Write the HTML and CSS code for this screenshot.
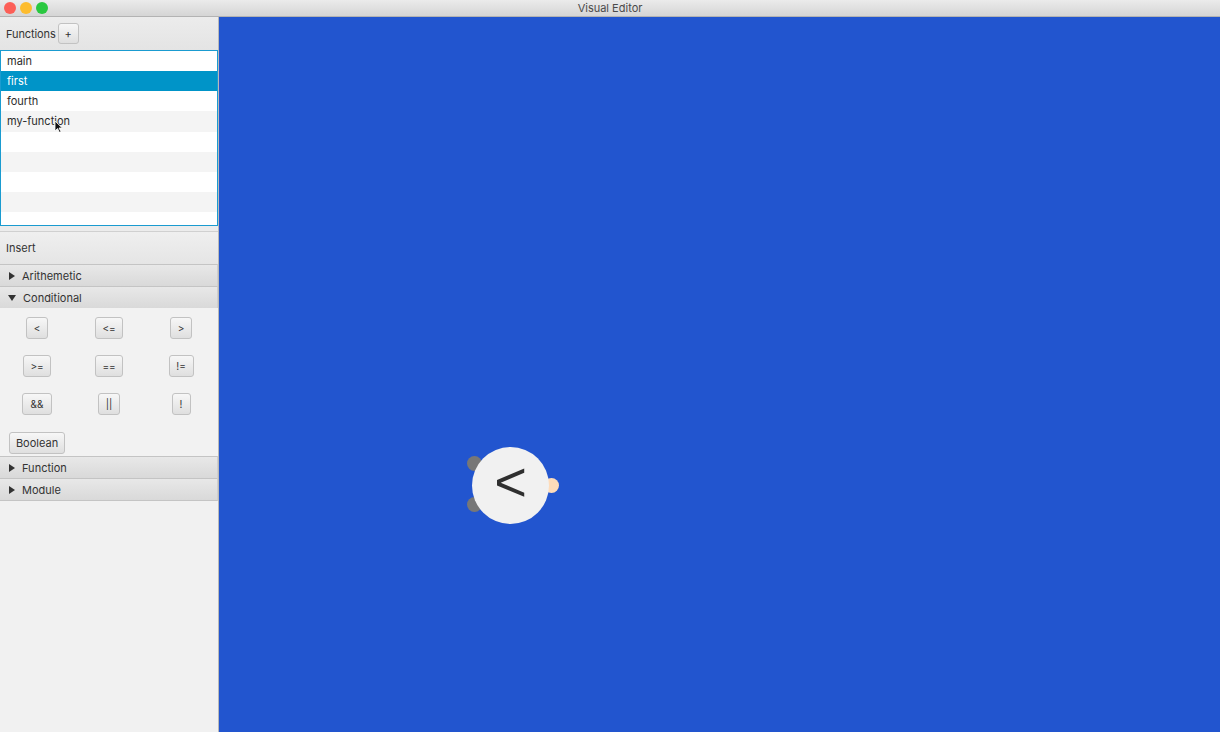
FILE: index.html
```html
<!DOCTYPE html>
<html>
<head>
<meta charset="utf-8">
<title>Visual Editor</title>
<link rel="stylesheet" href="styles.css">
</head>
<body>
<div class="window">
  <div class="titlebar">
    <div class="lights">
      <span class="light red"></span>
      <span class="light yellow"></span>
      <span class="light green"></span>
    </div>
    <div class="title">Visual Editor</div>
  </div>
  <div class="main">
    <aside class="sidebar">
      <div class="fn-header">
        <span class="label">Functions</span>
        <button class="btn plus">+</button>
      </div>
      <div class="list">
        <div class="row">main</div>
        <div class="row odd selected">first</div>
        <div class="row">fourth</div>
        <div class="row odd hover">my-function
          <svg class="cursor" width="9" height="13" viewBox="0 0 9 13"><path d="M1 1 L1 11 L3.5 8.5 L5.5 12.5 L7 11.8 L5 8 L8.3 8 Z" fill="#111" stroke="#fff" stroke-width="0.8"/></svg>
        </div>
        <div class="row"></div>
        <div class="row odd"></div>
        <div class="row"></div>
        <div class="row odd"></div>
        <div class="row"></div>
      </div>
      <div class="sep"></div>
      <div class="insert-header">Insert</div>
      <div class="pane-header"><span class="arrow right"></span>Arithemetic</div>
      <div class="pane-header"><span class="arrow down"></span>Conditional</div>
      <div class="pane-content">
        <div class="op-grid">
          <div class="cell"><button class="btn op w22">&lt;</button></div>
          <div class="cell"><button class="btn op w28">&lt;=</button></div>
          <div class="cell"><button class="btn op w22">&gt;</button></div>
          <div class="cell"><button class="btn op w28">&gt;=</button></div>
          <div class="cell"><button class="btn op w28">==</button></div>
          <div class="cell"><button class="btn op w25">!=</button></div>
          <div class="cell"><button class="btn op w30">&amp;&amp;</button></div>
          <div class="cell"><button class="btn op w22">||</button></div>
          <div class="cell"><button class="btn op w19">!</button></div>
        </div>
        <button class="btn bool">Boolean</button>
      </div>
      <div class="pane-header"><span class="arrow right"></span>Function</div>
      <div class="pane-header last"><span class="arrow right"></span>Module</div>
      <div class="rest"></div>
    </aside>
    <section class="canvas">
      <span class="port in1"></span>
      <span class="port in2"></span>
      <span class="port out"></span>
      <div class="node"><span class="glyph">&lt;</span></div>
    </section>
  </div>
</div>
</body>
</html>
```
FILE: styles.css
```css
* { box-sizing: border-box; }
html, body { margin: 0; padding: 0; }
body {
  width: 1220px;
  height: 732px;
  overflow: hidden;
  font-family: "Inter", "Liberation Sans", sans-serif;
  font-size: 11px;
  color: #333;
}
.window {
  display: flex;
  flex-direction: column;
  width: 1220px;
  height: 732px;
}
.titlebar {
  height: 17px;
  flex: 0 0 17px;
  background: linear-gradient(#ebebeb, #d5d5d5);
  border-bottom: 1px solid #b3b3b3;
  display: flex;
  align-items: center;
  justify-content: center;
  position: relative;
}
.lights {
  position: absolute;
  left: 4px;
  top: 2px;
  display: flex;
  gap: 4px;
}
.light {
  width: 12px;
  height: 12px;
  border-radius: 50%;
  display: block;
}
.red { background: #fc5f57; }
.yellow { background: #fdbc2e; }
.green { background: #2ac840; }
.title {
  font-size: 11px;
  color: #4a4a4a;
  line-height: 16px;
}
.main {
  flex: 1;
  display: flex;
}
.sidebar {
  width: 219px;
  flex: 0 0 219px;
  background: #f1f1f1;
  border-right: 1px solid #b9b9b9;
  display: flex;
  flex-direction: column;
}
.fn-header {
  height: 33px;
  flex: 0 0 33px;
  display: flex;
  align-items: center;
  gap: 2px;
  padding-left: 6px;
  background: linear-gradient(#ececec, #e4e4e4);
}
.label { color: #333; letter-spacing: -0.1px; }
.btn {
  font-family: "Inter", "Liberation Sans", sans-serif;
  font-size: 10px;
  color: #333;
  background: linear-gradient(#f7f7f7, #dfdfdf);
  border: 1px solid #c2c2c2;
  border-radius: 3px;
  padding: 0;
  height: 22px;
}
.plus { width: 21px; height: 21px; font-size: 11px; }
.list {
  height: 176px;
  flex: 0 0 176px;
  border: 1px solid #1a9bd0;
  background: #fff;
  overflow: hidden;
}
.row {
  height: 20px;
  line-height: 20px;
  padding-left: 6px;
  background: #fff;
  color: #2b2b2b;
  position: relative;
}
.row.odd { background: #f4f4f4; }
.row.hover { height: 21px; line-height: 21px; }
.row.selected { background: #0094c8; color: #fff; }
.cursor { position: absolute; left: 53px; top: 9px; }
.sep {
  height: 6px;
  flex: 0 0 6px;
  border-bottom: 1px solid #d0d0d0;
  background: #ececec;
}
.insert-header {
  height: 32px;
  flex: 0 0 32px;
  display: flex;
  align-items: center;
  padding-left: 6px;
  background: linear-gradient(#efefef, #e5e5e5);
  color: #333;
}
.pane-header {
  height: 22px;
  flex: 0 0 22px;
  display: flex;
  align-items: center;
  padding-left: 9px;
  gap: 7px;
  background: linear-gradient(#e8e8e8, #d9d9d9);
  border-top: 1px solid #c4c4c4;
  border-right: 1px solid #cfcfcf;
  color: #333;
}
.pane-header.last {
  height: 23px;
  flex: 0 0 23px;
  border-bottom: 1px solid #c4c4c4;
}
.arrow { display: block; width: 0; height: 0; }
.arrow.right {
  border-top: 4px solid transparent;
  border-bottom: 4px solid transparent;
  border-left: 6px solid #333;
}
.arrow.down {
  border-left: 4px solid transparent;
  border-right: 4px solid transparent;
  border-top: 6px solid #333;
  margin-left: -1px;
}
.pane-content {
  height: 148px;
  flex: 0 0 148px;
  background: #f2f2f2;
  padding: 9px 0 0 0;
}
.op-grid {
  display: grid;
  grid-template-columns: 72px 72px 72px;
  grid-auto-rows: 22px;
  row-gap: 16px;
  padding-left: 1px;
}
.cell { display: flex; justify-content: center; }
.op { height: 22px; font-size: 10px; }
.w19 { width: 19px; }
.w22 { width: 22px; }
.w25 { width: 25px; }
.w28 { width: 28px; }
.w30 { width: 30px; }
.bool {
  margin: 17px 0 0 9px;
  width: 56px;
  height: 22px;
  font-size: 11px;
}
.rest { flex: 1; background: #f1f1f1; }
.canvas {
  flex: 1;
  background: #2255cf;
  position: relative;
}
.node {
  position: absolute;
  left: 253px;
  top: 430px;
  width: 77px;
  height: 77px;
  border-radius: 50%;
  background: #f1f1f1;
  display: flex;
  align-items: center;
  justify-content: center;
}
.glyph {
  font-family: "Liberation Sans", sans-serif;
  font-size: 56px;
  font-weight: 400;
  color: #2f2f2f;
  line-height: 1;
  margin-top: -7px;
}
.port {
  position: absolute;
  width: 15px;
  height: 15px;
  border-radius: 50%;
}
.in1 { left: 248px; top: 439px; background: #777; }
.in2 { left: 248px; top: 480px; background: #777; }
.out { left: 325px; top: 461px; background: #fedcba; }
```
